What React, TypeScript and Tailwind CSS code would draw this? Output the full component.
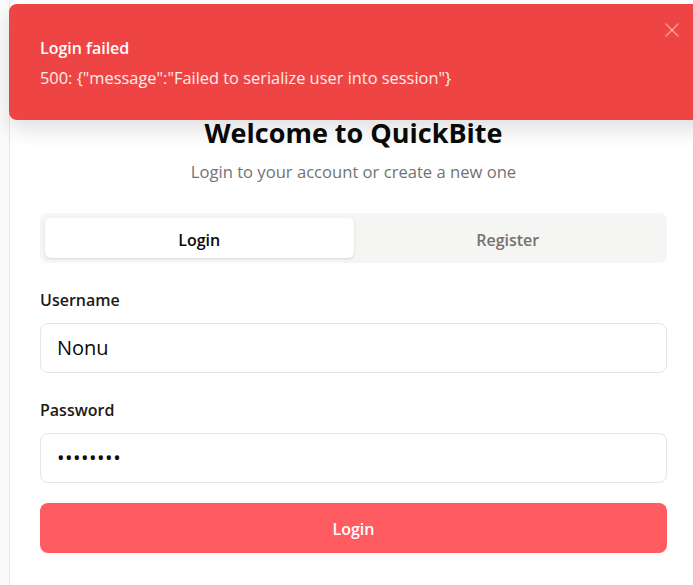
import { X } from "lucide-react";

const font = { fontFamily: '"Open Sans", "Noto Sans", sans-serif' };

function Toast() {
  return (
    <div className="absolute left-[9px] top-[4px] w-[700px] h-[116px] rounded-lg bg-[#ef4444] text-white shadow-[0_10px_20px_rgba(0,0,0,0.12)] pl-[31px] pt-[32px]">
      <p className="text-[16px] leading-6 font-semibold">Login failed</p>
      <p className="mt-[6px] text-[16.4px] leading-6 text-white/90">
        500: {'{"message":"Failed to serialize user into session"}'}
      </p>
      <button className="absolute left-[651px] top-[14px] text-white/45">
        <X className="w-6 h-6" strokeWidth={1.5} />
      </button>
    </div>
  );
}

export default function App() {
  return (
    <div className="relative w-[693px] h-[585px] overflow-hidden bg-[#fafafa]" style={font}>
      <div className="pl-[9px]">
        <div className="w-[688px] h-[585px] bg-white border-l border-[#e7e7e7] px-[30px] pt-[115px]">
          <h1 className="text-center text-[27px] leading-9 font-bold text-[#0a0a0a]">Welcome to QuickBite</h1>
          <p className="mt-[9px] text-center text-[16.6px] leading-6 text-[#737373]">
            Login to your account or create a new one
          </p>

          <div className="mt-[29px] h-[50px] p-[5px] rounded-lg bg-[#f5f5f4] grid grid-cols-2">
            <button className="rounded-md bg-white shadow-sm text-[16px] leading-6 pt-[3px] font-semibold text-[#0a0a0a]">Login</button>
            <button className="rounded-md text-[16px] leading-6 pt-[3px] font-semibold text-[#78716c]">Register</button>
          </div>

          <label className="block mt-[25px] text-[16px] leading-6 font-semibold text-[#1c1917]">Username</label>
          <div className="mt-[11px] h-[50px] rounded-lg border border-[#e5e5e5] flex items-center px-4 text-[20px] text-[#0a0a0a]">
            Nonu
          </div>

          <label className="block mt-[25px] text-[16px] leading-6 font-semibold text-[#1c1917]">Password</label>
          <div className="mt-[11px] h-[50px] rounded-lg border border-[#e5e5e5] flex items-center px-4 text-[20px] tracking-[0.5px] text-[#0a0a0a]">
            ••••••••
          </div>

          <button className="mt-[20px] w-full h-[50px] rounded-lg bg-[#ff5c62] text-white text-[16px] leading-6 pt-[2px] font-semibold">
            Login
          </button>
        </div>
      </div>
      <Toast />
    </div>
  );
}
